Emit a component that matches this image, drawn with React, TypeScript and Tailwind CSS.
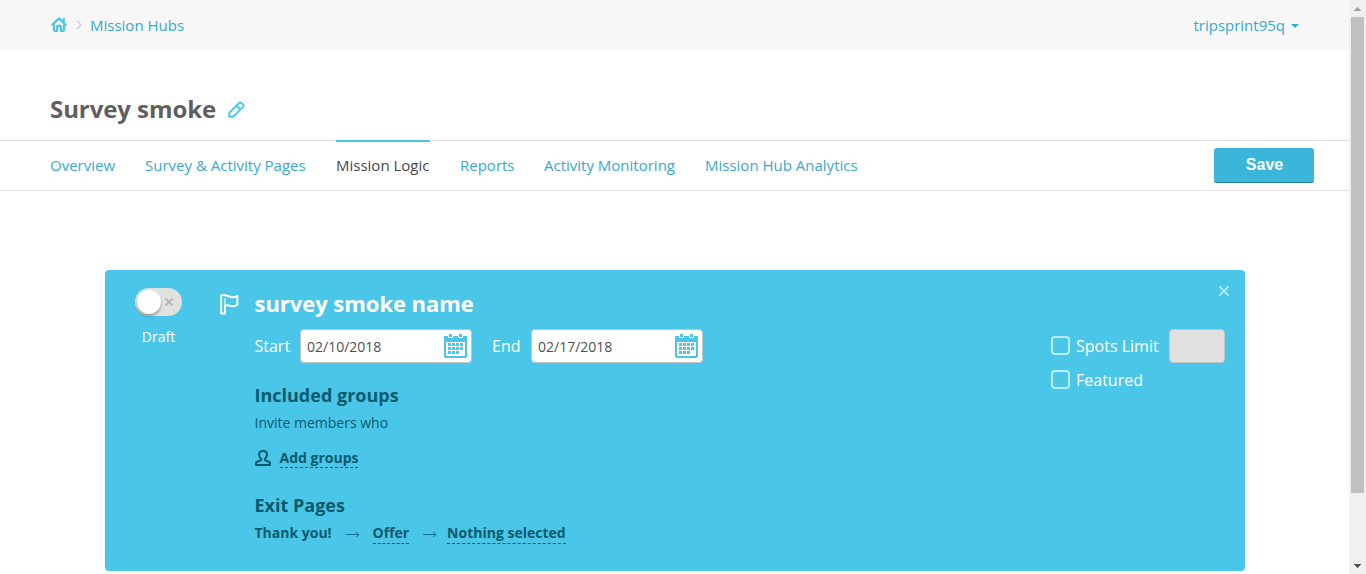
import React from "react";

const tabs = [
  { label: "Overview", width: "w-[65px]" },
  { label: "Survey & Activity Pages", width: "w-[161px]" },
  { label: "Mission Logic", width: "w-[94px]", active: true },
  { label: "Reports", width: "w-[54px]" },
  { label: "Activity Monitoring", width: "w-[131px]" },
  { label: "Mission Hub Analytics", width: "w-[153px]" },
];

function HomeIcon() {
  return (
    <svg width="16" height="16" viewBox="0 0 16 16" fill="none" stroke="#4ac6e9" strokeWidth="2.200" strokeLinejoin="round">
      <path d="M0.800 8.400 8 1.400l7.200 7" />
      <path d="M12.700 1v5" />
      <path d="M3 7.500v5.500q0 1 1 1h2v-3.500q0-1.800 2-1.800t2 1.800v3.500h2q1 0 1-1v-5.500" />
    </svg>
  );
}

function PencilIcon() {
  return (
    <svg width="17" height="17" viewBox="0 0 17 17" fill="none" stroke="#4ac6e9" strokeWidth="1.900" strokeLinejoin="round">
      <path d="M1.200 15.800v-3.900L11.100 2q1.300-1.200 2.500 0l1.400 1.400q1.200 1.200 0 2.500L5.100 15.800zM8.500 4.600 12.400 8.500" />
    </svg>
  );
}

function CalendarIcon() {
  return (
    <svg width="23" height="24" viewBox="0 0 23 24" fill="#4ac6e9" shapeRendering="crispEdges">
      <path d="M0 2h4v2h5V2h5v2h5V2h4v21h-1v1H1v-1H0zM2 8v14h19V8z" fillRule="evenodd" />
      <path d="M5 0h3v3H5zM15 0h3v3h-3z" />
      <path d="M8 9h3v3H8zM12 9h3v3h-3zM16 9h3v3h-3zM4 13h3v3H4zM8 13h3v3H8zM12 13h3v3h-3zM16 13h3v3h-3zM4 17h3v3H4zM8 17h3v3H8zM12 17h3v3h-3zM4 9h3v3H4z" />
    </svg>
  );
}

function FlagIcon() {
  return (
    <svg width="19" height="21" viewBox="0 0 19 21" fill="none" stroke="#fff" strokeWidth="2" strokeLinejoin="round">
      <path d="M1.200 1.400Q4 .8 6.200 1.500q3 .9 4.500 1.500 3 .8 6.600-.9v9.100q-4 1.700-7 .6-2.500-1-5.300-.3v7.900H1.200z" />
      <path d="M5 4v8" strokeWidth="1" />
    </svg>
  );
}

function PersonIcon() {
  return (
    <svg width="17" height="16" viewBox="0 0 17 16" fill="none" stroke="#0b5a6c" strokeWidth="2" strokeLinejoin="round">
      <path d="M6.200 9.200C4.700 7.500 4 6 4 4.500 4 2.200 5.800 1 8 1s4 1.200 4 3.500c0 1.500-.7 3-2.200 4.700v.8l4.400 2q.8.400.8 1.100V15H1v-1.900q0-.7.8-1.100l4.400-2z" />
    </svg>
  );
}

function ArrowIcon() {
  return (
    <svg width="14" height="7" viewBox="0 0 14 7" fill="none" stroke="#1b7087" strokeWidth="1">
      <path d="M0 3.500h13M10 1l3 2.500L10 6" />
    </svg>
  );
}

function DateField({ value }: { value: string }) {
  return (
    <div className="flex h-[34px] w-[172px] items-center justify-between rounded-[4px] border border-[#c5c5c5] bg-white pr-[4px] pl-[6px] text-sm text-[#505050]">
      <span className="w-[75px] whitespace-nowrap pt-px">{value}</span>
      <CalendarIcon />
    </div>
  );
}

function Scrollbar() {
  return (
    <div className="flex w-[17px] shrink-0 flex-col items-center bg-[#f0f0f0]">
      <div className="flex h-[17px] items-center justify-center">
        <svg width="7" height="4" viewBox="0 0 7 4" fill="#a3a3a3" shapeRendering="crispEdges"><path d="M3 0h1v1h1v1h1v1h1v1H0V3h1V2h1V1h1z" /></svg>
      </div>
      <div className="h-[476px] w-[13px] bg-[#c0c0c0]" />
      <div className="flex-1" />
      <div className="flex h-[17px] items-center justify-center">
        <svg width="7" height="4" viewBox="0 0 7 4" fill="#505050" shapeRendering="crispEdges"><path d="M0 0h7v1H6v1H5v1H4v1H3V3H2V2H1V1H0z" /></svg>
      </div>
    </div>
  );
}

export default function App() {
  return (
    <div className="flex h-[574px] w-[1366px] overflow-hidden bg-white font-['Open_Sans',sans-serif] text-[15px] text-[#38a9cf]">
      <div className="min-w-0 flex-1">
        <header className="flex h-[50px] items-center justify-between bg-[#f7f7f7] pr-[50px] pl-[51px]">
          <nav className="flex items-center">
            <HomeIcon />
            <svg className="mr-[8px] ml-[9px]" width="6" height="10" viewBox="0 0 6 10" fill="none" stroke="#d5d5d5" strokeWidth="1.800"><path d="m1 .8 4 4.200-4 4.200" /></svg>
            <a className="whitespace-nowrap">Mission Hubs</a>
          </nav>
          <div className="flex items-center gap-[6px]">
            <span>tripsprint95q</span>
            <svg className="mt-px" width="8" height="4" viewBox="0 0 8 4" fill="#24b4d9"><path d="M0 0h8L4 4z" /></svg>
          </div>
        </header>

        <div className="flex h-[90px] items-end pb-[14px] pl-[50px]">
          <h1 className="w-[178px] text-[24px] leading-[34px] font-bold tracking-[-0.080px] whitespace-nowrap text-[#5f5f5f]">Survey smoke</h1>
          <div className="pb-[8px]"><PencilIcon /></div>
        </div>

        <nav className="flex h-[51px] justify-between border-y border-[#e2e2e2] pr-[35px] pl-[50px]">
          <div className="-mt-px flex gap-[30px]">
            {tabs.map((tab) => (
              <a key={tab.label} className={`${tab.width} h-[50px] border-t-2 pt-[12px] leading-[22px] whitespace-nowrap ${tab.active ? "border-[#4ac6e9] text-[#484848]" : "border-transparent"}`}>{tab.label}</a>
            ))}
          </div>
          <button className="mt-[7px] h-[35px] w-[100px] rounded-[3px] border-b border-[#217c98] bg-[#3bb6da] pb-px pl-px font-['Liberation_Sans',sans-serif] text-base font-bold text-white">Save</button>
        </nav>

        <section className="mt-[79px] ml-[105px] flex h-[301px] w-[1140px] rounded-[4px] bg-[#4ac6e9]">
          <div className="ml-[30px] flex w-[47px] flex-col items-center pt-[18px]">
            <div className="flex h-[28px] w-[47px] items-center rounded-full bg-[#e1e1e1] pl-[2px]">
              <div className="size-[24px] rounded-full bg-white shadow-[0_2px_3px_rgba(0,0,0,0.35)]" />
              <svg className="ml-[4px]" width="8" height="8" viewBox="0 0 8 8" stroke="#b4b4b4" strokeWidth="1.800"><path d="m.5.5 7 7m0-7-7 7" /></svg>
            </div>
            <span className="mt-[11px] text-sm leading-5 text-white">Draft</span>
          </div>

          <div className="pt-[24px] pl-[38px]"><FlagIcon /></div>

          <div className="ml-[15.500px] flex-1 text-sm text-[#0b5a6c]">
            <h2 className="pt-[17px] text-[22px] leading-[32px] font-bold tracking-[-0.040px] text-white">survey smoke name</h2>
            <div className="mt-[10px] flex h-[34px] items-center text-base text-white">
              <span className="w-[45.500px]">Start</span>
              <DateField value="02/10/2018" />
              <span className="ml-[20px] w-[39px]">End</span>
              <DateField value="02/17/2018" />
            </div>
            <h3 className="mt-[20px] text-[18px] leading-[24px] font-bold">Included groups</h3>
            <p className="mt-[6px] leading-5">Invite members who</p>
            <div className="mt-[15px] flex h-[20px] items-start">
              <div className="mr-[8px] pt-[2px]"><PersonIcon /></div>
              <a className="border-b border-dashed border-[#0b5a6c] leading-[19px] font-bold">Add groups</a>
            </div>
            <h3 className="mt-[25px] text-[18px] leading-[24px] font-bold">Exit Pages</h3>
            <div className="mt-[6px] flex items-start leading-5 font-bold whitespace-nowrap">
              <span className="w-[91px]">Thank you!</span>
              <div className="flex h-[22px] w-[27px] items-center"><ArrowIcon /></div>
              <a className="border-b border-dashed border-[#0b5a6c]">Offer</a>
              <div className="ml-[14px] flex h-[22px] w-[24px] items-center"><ArrowIcon /></div>
              <a className="border-b border-dashed border-[#0b5a6c]">Nothing selected</a>
            </div>
          </div>

          <div className="w-[194px] text-base text-white">
            <div className="flex h-[59px] justify-end pt-[16px] pr-[16px]">
              <svg width="10" height="10" viewBox="0 0 10 10" stroke="#b2efff" strokeWidth="1.800"><path d="m.5.5 9 9m0-9-9 9" /></svg>
            </div>
            <div className="flex h-[34px] items-center">
              <span className="mr-[6px] -mt-px size-[19px] rounded-[4px] border-2 border-[#bcecf9]" />
              <span className="w-[93px]">Spots Limit</span>
              <span className="h-[34px] w-[56px] rounded-[4px] border border-[#c5c5c5] bg-[#e0e0e0]" />
            </div>
            <div className="flex h-[34px] items-center">
              <span className="mr-[6px] -mt-px size-[19px] rounded-[4px] border-2 border-[#bcecf9]" />
              <span>Featured</span>
            </div>
          </div>
        </section>
      </div>
      <Scrollbar />
    </div>
  );
}
